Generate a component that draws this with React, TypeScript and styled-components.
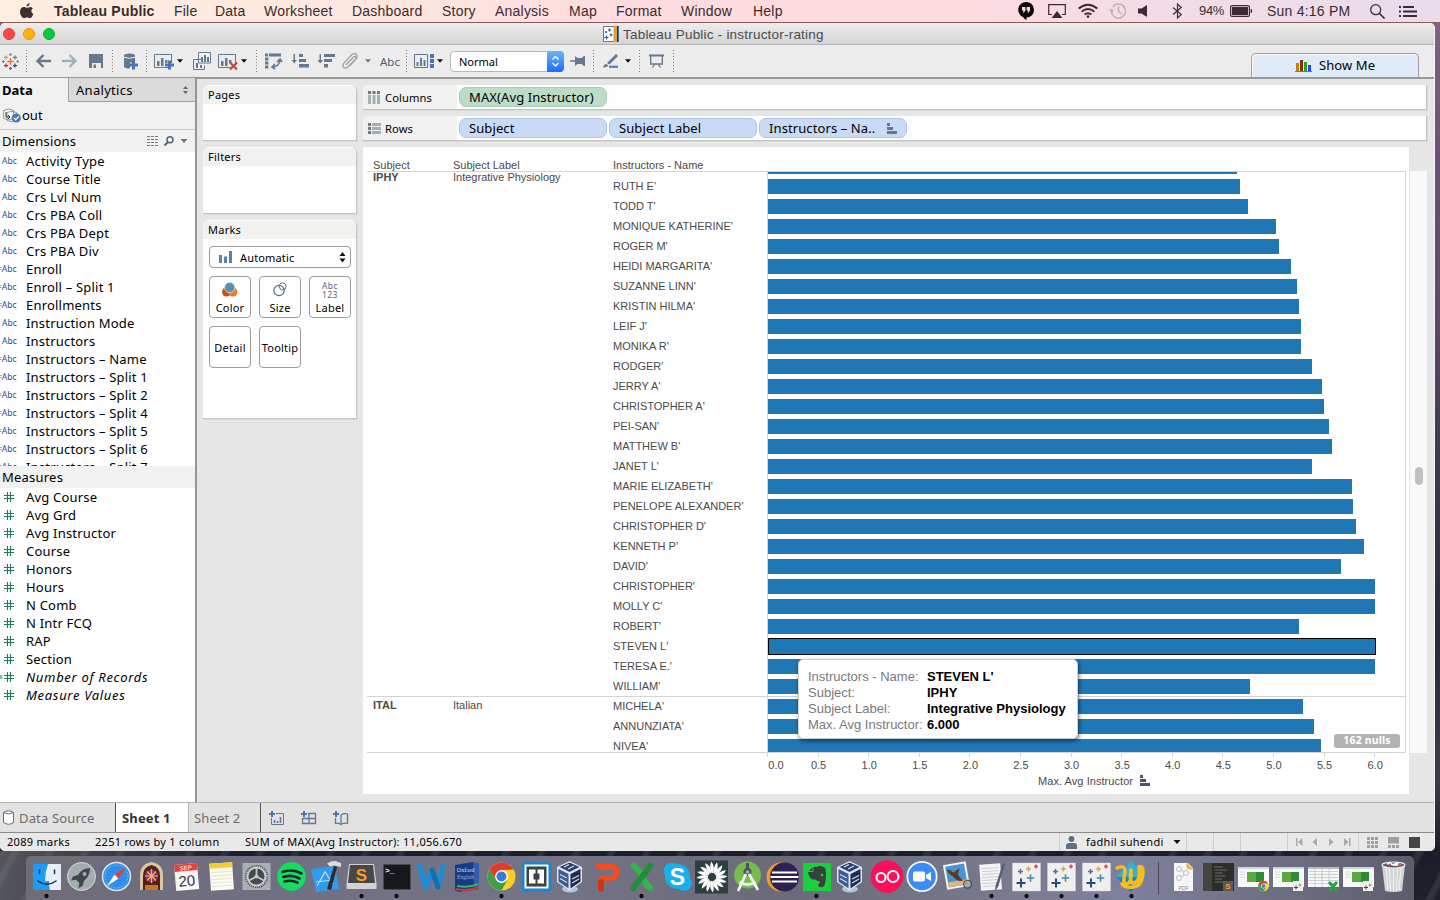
import React from "react";
import styled, { createGlobalStyle, css } from "styled-components";

const UI = `"Noto Sans", "Open Sans", sans-serif`;
const HELV = `"Liberation Sans", Arial, sans-serif`;
const SLATE = "#66788c";
const BLUE = "#4a74b8";

const Global = createGlobalStyle`
  *, *::before, *::after { box-sizing: border-box; }
  body { margin: 0; overflow: hidden; font-family: ${UI}; color: #000; }
  svg { display: block; overflow: visible; }
`;

/* ---------- shell ---------- */
const Desktop = styled.div`
  width: 1440px;
  height: 900px;
  display: flex;
  flex-direction: column;
  overflow: hidden;
  background:
    repeating-linear-gradient(118deg, transparent 0 9px, rgba(150, 150, 165, 0.16) 12px 15px, transparent 19px 31px) 0 851px / 1440px 49px no-repeat,
    linear-gradient(90deg, #55555c 0, #45454e 60px, transparent 240px) 0 851px / 1440px 49px no-repeat,
    linear-gradient(180deg, #87648b 0, #6c4f76 160px, #64486c 300px, #3b3a4d 460px, #262b38 640px, #3c3d46 780px, #1b1e28 850px, #1d212b 900px);
`;

const MenuBar = styled.header`
  height: 23px;
  flex: none;
  display: flex;
  align-items: center;
  padding-left: 20px;
  border-bottom: 1px solid #8b5a58;
  background: linear-gradient(90deg, #fdeee0 0, #fee7e0 350px, #fddcdf 640px, #fddbe0 960px, #f2dce6 1180px, #e9dceb 1440px);
  font-family: ${HELV};
  font-size: 14px;
  color: #3c2a2c;
`;

const Spot = styled.div<{ $ml?: number; $w: number }>`
  flex: none;
  margin-left: ${(p) => p.$ml ?? 0}px;
  width: ${(p) => p.$w}px;
  display: flex;
  align-items: center;
  white-space: nowrap;
`;

const MenuItem = styled(Spot)<{ $bold?: boolean; $ls?: number; $size?: number }>`
  height: 22px;
  line-height: 22px;
  font-size: ${(p) => p.$size ?? 14}px;
  font-weight: ${(p) => (p.$bold ? 700 : 400)};
  letter-spacing: ${(p) => p.$ls ?? 0.22}px;
`;

const Window = styled.main`
  width: 1435px;
  height: 828px;
  flex: none;
  display: flex;
  flex-direction: column;
  background: #ececec;
  border-radius: 5px;
  border-right: 1px solid #f6f6f6;
  overflow: hidden;
`;

const TitleBar = styled.div`
  height: 22px;
  flex: none;
  display: flex;
  align-items: center;
  padding-left: 3px;
  background: linear-gradient(#ededed, #d4d4d4);
  border-bottom: 1px solid #b3b3b3;
  font-family: ${HELV};
  font-size: 13.5px;
  color: #4b4b4b;
`;

const Light = styled.i<{ $c: string; $b: string }>`
  width: 12px;
  height: 12px;
  margin-right: 8px;
  border-radius: 50%;
  background: ${(p) => p.$c};
  border: 1px solid ${(p) => p.$b};
`;

const Title = styled.div`
  display: flex;
  align-items: center;
  gap: 4px;
  margin-left: 540px;
  padding-top: 1px;
  letter-spacing: 0.21px;
  white-space: nowrap;
`;

const Toolbar = styled.div`
  height: 32px;
  flex: none;
  display: flex;
  align-items: center;
  padding-left: 2px;
  background: #ececec;
`;

const ToolText = styled(Spot)`
  font-size: 11.5px;
  color: #4a5d73;
`;

const ToolDivider = styled.i<{ $ml: number }>`
  flex: none;
  width: 1px;
  height: 22px;
  margin-left: ${(p) => p.$ml}px;
  background: repeating-linear-gradient(#7d7d7d 0 1px, transparent 1px 3px);
`;

const FitSelect = styled.div`
  flex: none;
  width: 114px;
  height: 21px;
  margin-left: 6px;
  display: flex;
  border: 1px solid #b7b7b7;
  border-radius: 4px;
  background: #fff;
  font-size: 11px;
  line-height: 19px;
  padding-left: 8px;
  justify-content: space-between;
`;

const Stepper = styled.div`
  width: 17px;
  margin: -1px;
  border-radius: 0 4px 4px 0;
  background: linear-gradient(#6cb4fa, #1a6dfb);
  display: grid;
  place-items: center;
`;

const ShowMe = styled.div`
  flex: none;
  align-self: flex-end;
  width: 168px;
  height: 24px;
  margin-left: 577px;
  display: flex;
  align-items: center;
  justify-content: center;
  gap: 7px;
  border: 1px solid #979fa5;
  border-bottom: 0;
  border-radius: 5px 5px 0 0;
  background: #dfebf6;
  box-shadow: inset 1px 1px #fff;
  font-size: 13px;
  line-height: 21px;
  letter-spacing: 0.1px;
`;

const Body = styled.div`
  height: 725px;
  flex: none;
  display: flex;
  background: #e6e6e6;
  border-top: 2px solid #999;
`;

/* ---------- data pane ---------- */
const Side = styled.aside`
  width: 197px;
  flex: none;
  margin-top: -1px;
  display: flex;
  flex-direction: column;
  background: #fff;
  border-right: 2px solid #949494;
`;

const SideTabs = styled.div`
  height: 24px;
  flex: none;
  display: flex;
  font-size: 13px;
`;

const DataTab = styled.div`
  width: 68px;
  padding-left: 2px;
  line-height: 24px;
  font-weight: 700;
  background: #f1f1f1;
`;

const AnalyticsTab = styled.div`
  flex: 1;
  display: flex;
  justify-content: space-between;
  padding: 1px 7px 0;
  line-height: 23px;
  letter-spacing: 0.3px;
  background: #dadada;
  border: solid #a0a0a0;
  border-width: 0 0 1px 1px;
  & > svg { margin-top: 7px; }
`;

const Source = styled.div`
  height: 28px;
  flex: none;
  display: flex;
  align-items: center;
  gap: 1px;
  padding: 0 0 1px 3px;
  background: #f1f1f1;
  border-bottom: 1px solid #cacaca;
  font-size: 13px;
`;

const PaneHead = styled.div`
  height: 22px;
  flex: none;
  display: flex;
  align-items: center;
  padding-left: 2px;
  background: #f1f1f1;
  font-size: 13px;
  letter-spacing: 0.22px;
`;

const HeadTools = styled.div`
  margin-left: auto;
  margin-right: 7px;
  display: flex;
  align-items: center;
  gap: 5px;
`;

const FieldList = styled.div<{ $h: number }>`
  height: ${(p) => p.$h}px;
  flex: none;
  overflow: hidden;
`;

const FieldRow = styled.div<{ $italic?: boolean }>`
  height: 18px;
  display: flex;
  align-items: center;
  font-size: 13px;
  line-height: 18px;
  letter-spacing: ${(p) => (p.$italic ? 0.68 : 0.2)}px;
  white-space: nowrap;
  font-style: ${(p) => (p.$italic ? "italic" : "normal")};
`;

const FieldType = styled.span<{ $calc?: boolean }>`
  flex: none;
  width: 26px;
  padding-left: 2px;
  text-indent: ${(p) => (p.$calc ? "-5px" : "0")};
  font-size: 8.5px;
  letter-spacing: 0;
  color: #234f93;
`;

const HashBox = styled.span`
  flex: none;
  width: 26px;
  padding-left: 4px;
`;

/* ---------- cards ---------- */
const Cards = styled.div`
  width: 154px;
  flex: none;
  margin: 6px 0 0 6px;
  display: flex;
  flex-direction: column;
  gap: 6px;
`;

const Card = styled.section<{ $h: number }>`
  height: ${(p) => p.$h}px;
  flex: none;
  border: solid #c5c5c5;
  border-width: 0 1px 1px 0;
  border-radius: 6px 6px 0 0;
  box-shadow: 1px 1px #dadada;
  background: #fdfdfd;
  font-size: 11px;
  overflow: hidden;
`;

const CardTitle = styled.h3`
  margin: 0;
  height: 19px;
  padding-left: 5px;
  background: #f1f1ef;
  border-top: 1px solid #fff;
  font: inherit;
  line-height: 18px;
  letter-spacing: 0.25px;
`;

const MarkSelect = styled.div`
  width: 142px;
  height: 22px;
  margin: 7px 0 8px 6px;
  padding: 0 4px 0 9px;
  display: flex;
  align-items: center;
  gap: 7px;
  border: 1px solid #9c9c9c;
  border-radius: 4px;
  background: #fff;
  letter-spacing: 0.15px;
  & > :last-child { margin-left: auto; }
`;

const MarkGrid = styled.div`
  display: grid;
  grid-template-columns: repeat(3, 42px);
  grid-auto-rows: 42px;
  gap: 8px;
  margin-left: 6px;
`;

const MarkButton = styled.div<{ $plain?: boolean }>`
  display: flex;
  flex-direction: column;
  align-items: center;
  justify-content: ${(p) => (p.$plain ? "center" : "space-between")};
  padding: ${(p) => (p.$plain ? "0" : "5px 0 2px")};
  border: 1px solid #9c9c9c;
  border-radius: 4px;
  background: #fff;
  line-height: 15px;
  letter-spacing: 0.22px;
  white-space: nowrap;
`;

const LabelGlyph = styled.div`
  font-size: 8.5px;
  line-height: 8.5px;
  letter-spacing: 0.4px;
  color: #4f6781;
  text-align: center;
`;

/* ---------- work area ---------- */
const Work = styled.div`
  flex: 1;
  min-width: 0;
  margin: 6px 0 0 6px;
  display: flex;
  flex-direction: column;
`;

const Shelf = styled.div`
  width: 1064px;
  height: 25px;
  flex: none;
  margin-bottom: 6px;
  display: flex;
  align-items: center;
  gap: 2px;
  background: #fdfdfd;
  border: solid #c2c2c2;
  border-width: 0 1px 1px 0;
  box-shadow: 1px 1px #d9d9d9;
  border-radius: 6px 0 0 0;
`;

const ShelfName = styled.div`
  width: 94px;
  height: 24px;
  flex: none;
  display: flex;
  align-items: center;
  gap: 4px;
  padding: 0 0 0 5px;
  background: #f1f1ef;
  border-radius: 6px 0 0 0;
  font-size: 11.2px;
  letter-spacing: 0.1px;
`;

const Pill = styled.div<{ $green?: boolean }>`
  width: 148px;
  height: 20px;
  flex: none;
  display: flex;
  align-items: center;
  justify-content: space-between;
  padding: 0 9px;
  border-radius: 7px;
  font-size: 13px;
  letter-spacing: 0.1px;
  white-space: nowrap;
  ${(p) =>
    p.$green
      ? css`background: #bddcc6; border: 1px solid #a9cdb6;`
      : css`background: #c8daf4; border: 1px solid #adc4e4;`}
`;

const VizRow = styled.div`
  display: flex;
  height: 647px;
`;

const Viz = styled.section`
  position: relative;
  width: 1046px;
  height: 647px;
  flex: none;
  padding: 0 4px;
  background: #fff;
  font-family: ${HELV};
  font-size: 11px;
  color: #4a4a4a;
`;

const VizHead = styled.div`
  height: 24px;
  display: flex;
  align-items: flex-end;
  line-height: 12px;
  padding-left: 6px;
`;

const Col = styled.span<{ $w: number }>`
  flex: none;
  width: ${(p) => p.$w}px;
`;

const Plot = styled.div`
  position: relative;
  height: 582px;
  width: 1039px;
  overflow: hidden;
  border: 1px solid #d4d4d4;
  border-left: 0;
  display: flex;
`;

const GroupColumn = styled.div`
  width: 400px;
  flex: none;
`;

const Group = styled.div<{ $h: number; $pad?: number }>`
  height: ${(p) => p.$h}px;
  display: flex;
  padding: ${(p) => p.$pad ?? 0}px 0 0 6px;
  line-height: 10px;
  border-bottom: 1px solid #d4d4d4;
  & > b { width: 80px; }
  & > span { width: 160px; }
`;

const Marks = styled.div`
  position: absolute;
  left: 246px;
  top: -16px;
  right: 0;
`;

const MarkRow = styled.div<{ $rule?: boolean }>`
  height: 20px;
  display: flex;
  align-items: center;
  line-height: 20px;
  white-space: nowrap;
  box-shadow: ${(p) => (p.$rule ? "inset 0 1px #d4d4d4" : "none")};
  & > span { width: 154px; flex: none; }
`;

const Lane = styled.div`
  flex: 1;
  height: 20px;
  display: flex;
  align-items: center;
  border-left: 1px solid #d4d4d4;
`;

const Bar = styled.div<{ $active?: boolean }>`
  height: ${(p) => (p.$active ? 17 : 15)}px;
  background: #1f77b4;
  border: ${(p) => (p.$active ? "1px solid #000" : "0")};
`;

const Axis = styled.div`
  margin-left: 400px;
  height: 24px;
  display: flex;
`;

const Tick = styled.div<{ $first?: boolean }>`
  flex: none;
  width: 50.6px;
  border-left: 1px solid #d4d4d4;
  height: 4px;
  & > span {
    display: block;
    width: 40px;
    margin-left: ${(p) => (p.$first ? -12 : -20)}px;
    padding-top: 6px;
    line-height: 12px;
    text-align: center;
  }
`;

const AxisTitle = styled.div`
  display: flex;
  gap: 7px;
  margin-left: 671px;
  line-height: 12px;
  margin-top: -2px;
  letter-spacing: 0.06px;
`;

const Nulls = styled.div`
  position: absolute;
  right: 5px;
  bottom: 4px;
  width: 66px;
  height: 14px;
  border-radius: 3px;
  background: #b3b3b3;
  color: #fff;
  font: 700 10.5px/13px ${UI};
  letter-spacing: 0.15px;
  text-align: center;
`;

const Tooltip = styled.dl`
  position: absolute;
  left: 435px;
  top: 512px;
  width: 280px;
  height: 80px;
  margin: 0;
  padding: 8px 9px;
  display: grid;
  grid-template-columns: 119px auto;
  grid-auto-rows: 16px;
  background: #fff;
  border: 1px solid #cfcfcf;
  border-radius: 5px;
  box-shadow: 1px 2px 4px rgba(0, 0, 0, 0.55);
  font-size: 13px;
  line-height: 17px;
  white-space: nowrap;
  dt { color: #7a7a7a; }
  dd { margin: 0; color: #000; font-weight: 700; }
`;

const ScrollTrack = styled.div`
  width: 17px;
  height: 582px;
  margin: 24px 0 0 1px;
  background: #f9f9f9;
  display: flex;
  justify-content: center;
  align-items: flex-start;
  padding-top: 296px;
`;

const Thumb = styled.i`
  width: 8px;
  height: 18px;
  border-radius: 4px;
  background: #c1c1c1;
`;

/* ---------- sheet tabs and status ---------- */
const SheetBar = styled.div`
  height: 31px;
  flex: none;
  display: flex;
  align-items: stretch;
  background: #e2e2e2;
  border-top: 1px solid #b2b2b2;
  border-bottom: 1px solid #8b8b8b;
  font-size: 13px;
  line-height: 28px;
  color: #666;
`;

const SheetTab = styled.div<{ $w: number; $active?: boolean; $edge?: string; $pad?: number }>`
  width: ${(p) => p.$w}px;
  flex: none;
  display: flex;
  align-items: center;
  gap: 5px;
  padding-left: ${(p) => p.$pad ?? 5}px;
  background: ${(p) => (p.$active ? "#fff" : "transparent")};
  color: ${(p) => (p.$active ? "#333" : "#6a6a6a")};
  font-weight: ${(p) => (p.$active ? 700 : 400)};
  border-right: 1px solid ${(p) => p.$edge ?? "#4f4f4f"};
  letter-spacing: 0.15px;
`;

const NewTabs = styled.div`
  display: flex;
  align-items: center;
  gap: 17px;
  margin-left: 8px;
`;

const Status = styled.footer`
  height: 18px;
  flex: none;
  display: flex;
  background: #e9e9e9;
  font-size: 11px;
  line-height: 18px;
`;

const StatusCell = styled(Spot)<{ $line?: boolean; $pad?: number; $gap?: number }>`
  letter-spacing: 0.29px;
  padding-left: ${(p) => p.$pad ?? 0}px;
  gap: ${(p) => p.$gap ?? 0}px;
  border-left: ${(p) => (p.$line ? "1px solid #cfcfcf" : "0")};
`;

/* ---------- dock ---------- */
const DockArea = styled.div`
  height: 49px;
  padding: 5px 26px 0;
`;

const Dock = styled.nav`
  height: 44px;
  display: flex;
  padding-left: 2.5px;
  border-radius: 5px 5px 0 0;
  background: linear-gradient(90deg, #6f6c78 0, #706f81 200px, #747488 520px, #6b6a78 760px, #7b7c92 1010px, #7f819d 1100px, #5d5e6c 1386px);
`;

const DockCell = styled.div<{ $run?: boolean }>`
  width: 35px;
  height: 44px;
  flex: none;
  background: ${(p) => (p.$run ? "radial-gradient(circle at 17.5px 40px, #0c0c14 1.8px, transparent 2.4px)" : "none")};
`;

const DockDivider = styled.i`
  width: 1px;
  height: 32px;
  margin: 6px 6.5px 0 9.5px;
  background: #45464f;
`;

/* ---------- toolbar drawings ---------- */
const Caret = ({ c = "#111", w = 7 }: { c?: string; w?: number }) => (
  <svg width={w} height={4} viewBox="0 0 7 4"><path d="M0 0h7L3.5 4z" fill={c} /></svg>
);

const plusPath = (x: number, y: number, r: number) => `M${x - r} ${y}h${2 * r}M${x} ${y - r}v${2 * r}`;

const TableauLogo = () => (
  <svg width="17" height="17" viewBox="0 0 17 17" strokeWidth="1.2" fill="none">
    <path d={plusPath(8.5, 8.5, 3.2)} stroke="#e8762c" strokeWidth="1.5" />
    <path d={plusPath(4, 4.4, 2)} stroke="#e8912c" />
    <path d={plusPath(13, 4.4, 2)} stroke="#5b879b" />
    <path d={plusPath(4, 12.6, 2)} stroke="#c72035" />
    <path d={plusPath(13, 12.6, 2)} stroke="#1f447e" />
    <path d={plusPath(8.5, 1.6, 1.5)} stroke="#6ca0b5" />
    <path d={plusPath(8.5, 15.4, 1.5)} stroke="#5b6591" />
    <path d={plusPath(1.4, 8.5, 1.4)} stroke="#c0607a" />
    <path d={plusPath(15.6, 8.5, 1.4)} stroke="#7199a6" />
  </svg>
);

const Arrow = ({ flip, c = SLATE }: { flip?: boolean; c?: string }) => (
  <svg width="15" height="14" viewBox="0 0 15 14">
    <path d="M15 7H2M7.500 1L1.500 7l6 6" stroke={c} strokeWidth="2.400" fill="none" transform={flip ? "translate(15 0) scale(-1 1)" : undefined} />
  </svg>
);

const SaveIcon = () => (
  <svg width="14" height="14"><path d="M0 0h14v14H0z" fill={SLATE} /><path d="M3 9h9v5H3z" fill="#ececec" /><path d="M4.500 10.500h2.500V14H4.500z" fill={SLATE} /></svg>
);

const DbPlus = () => (
  <svg width="14" height="17">
    <path d="M0 2.500v11.500q2.500 2 6 1.500v-6h5V2.500z" fill={SLATE} /><ellipse cx="5.500" cy="2.500" rx="5.500" ry="2" fill={SLATE} />
    <path d="M0 4.200q5.500 2.300 11 0" stroke="#ececec" fill="none" />
    <path d="M5 12h9M9.500 7.500v9" stroke={BLUE} strokeWidth="3" />
  </svg>
);

const ChartBox = ({ children }: { children?: React.ReactNode }) => (
  <svg width="20" height="17">
    <path d="M14 14.500H.500v-13h17V10" fill="none" stroke={SLATE} />
    <path d="M3 8h2.500v5H3zM7 5h2.500v8H7zM11 7h2.500v3H11z" fill={SLATE} />
    {children}
  </svg>
);

const DupIcon = () => (
  <svg width="18" height="18">
    <path d="M5.500.500h12v10.500h-12z" fill="#f3f3f3" stroke={SLATE} />
    <path d="M8 5h2v5H8zM11 3h2v7h-2zM14 5h2v5h-2z" fill={SLATE} />
    <path d="M8 7.500H.500v10h11v-4" fill="none" stroke={SLATE} /><path d="M3 11h2v5H3zM7 13h2v3H7z" fill={SLATE} />
  </svg>
);

const SwapIcon = () => (
  <svg width="17" height="16" fill="none" stroke={SLATE}>
    <path d="M0 2h16" strokeWidth="3" strokeDasharray="3 1 12" /><path d="M1.700 4.500V16" strokeWidth="3.400" strokeDasharray="3 1" />
    <path d="M7 14q7 0 8-7M12 9l3-3 2 3M10 11l-3 3 3 2" strokeWidth="1.700" />
  </svg>
);

const SortIcon = ({ desc }: { desc?: boolean }) => (
  <svg width="18" height="14" fill={SLATE}>
    <path d="M2.500 0h1.500v6h2L3.200 9.500.500 6h2z" />
    {desc ? <path d="M7 0h11v3H7zM7 5h8v3H7zM7 10h4v3.500H7z" /> : <path d="M8 0h4v3H8zM8 5h7v3H8zM8 10h10v3.500H8z" />}
  </svg>
);

const ClipIcon = () => (
  <svg width="16" height="16" fill="none" stroke="#9a9fa6" strokeWidth="1.200">
    <path d="M4 12l7.500-8q1.500-1.200 2.300 0 .6 1-.4 2.200L6 14q-2.500 2-4.500.3-1.500-2 .5-4.300L9.500 2q2.600-2.300 4.800-.7 1.700 2-.2 4.500L8 12.500" />
  </svg>
);

const FitIcon = () => (
  <svg width="20" height="14">
    <path d="M.500.500h13v13H.500z" fill="none" stroke={SLATE} /><path d="M2.500 8h2v4h-2zM6 4h2v8H6zM9.500 6h2v6h-2z" fill={SLATE} />
    <path d="M16 0h4v4h-4zM16 5h4v4h-4zM16 10h4v4h-4z" fill={BLUE} />
  </svg>
);

const PinIcon = () => (
  <svg width="15" height="12"><path d="M0 6h6" stroke={SLATE} strokeWidth="1.300" /><path d="M5 1l2.500 2h4L14 1h1v10h-1l-2.500-2h-4L5 11z" fill={SLATE} /></svg>
);

const PenIcon = () => (
  <svg width="15" height="14"><path d="M13 0l2 2-8.500 8.500-2.500-1.500z" fill={SLATE} /><path d="M0 13.500q1-3.500 3-3.500l2.500 1.500Q4 13.500 0 13.500z" fill={SLATE} /><path d="M6 11.800h9v2H6z" fill={BLUE} /></svg>
);

const EaselIcon = () => (
  <svg width="15" height="14" fill="none" stroke={SLATE}><path d="M0 1.500h15" strokeWidth="2" /><path d="M1.700 2v8h11.600V2M5.500 10.500l-2 3M9.500 10.500l2 3" strokeWidth="1.300" /></svg>
);

const StepIcon = ({ white }: { white?: boolean }) => (
  <svg width="7" height="10"><path d={white ? "M.500 3.500l3-3 3 3M.500 7l3 3 3-3" : "M.500 4l3-4 3 4zM.500 6.500h6l-3 4z"} fill={white ? "none" : "#111"} stroke={white ? "#fff" : "none"} strokeWidth="1.400" /></svg>
);

const SortGlyph = ({ c = SLATE }: { c?: string }) => (
  <svg width="10" height="11" fill={c}><path d="M0 0h3v3H0zM0 4h6v3H0zM0 8h10v3H0z" /></svg>
);

const HashIcon = ({ calc }: { calc?: boolean }) => (
  <svg width="10" height="10" stroke="#1f7a5b" strokeWidth="1.100" fill="none">
    <path d="M0 3.500h10M0 6.500h10M3.500 0v10M6.500 0v10" />{calc && <path d="M-5 4h3.500M-5 6h3.500" />}
  </svg>
);

/* ---------- menu bar drawings ---------- */
const Apple = () => (
  <svg width="14" height="16" viewBox="0 0 14 16" fill="#3f3030"><path d="M9.600 0c.2 1.700-1.300 3.500-3 3.500C6.400 1.900 8 .2 9.600 0zM12.900 5.400c-2.300 1.400-1.900 4.400.5 5.400-.6 1.900-2 4.400-3.400 4.400-1.200 0-1.500-.7-2.900-.7s-1.800.7-2.900.7C2.200 15.200 0 11.700 0 8.700c0-3 1.900-4.700 3.800-4.700 1.300 0 2.300.8 3.100.8.800 0 2-.9 3.600-.9 1 .1 1.900.6 2.400 1.500z" /></svg>
);

const STATUS_INK = "#3f2936";

const Hangouts = () => (
  <svg width="16" height="18"><path d="M8 0a7.800 7.800 0 0 1 .5 15.600V18Q6 17 5 15A7.800 7.800 0 0 1 8 0z" fill="#0a0608" /><path d="M4 5h3.400v3.500L6 10.500H4.800l.8-2H4zM8.600 5H12v3.500l-1.400 2H9.400l.8-2H8.600z" fill="#f5dce2" /></svg>
);
const Airplay = () => (
  <svg width="18" height="14"><path d="M4 10.500H.700V.700h16.600v9.800H14" fill="none" stroke={STATUS_INK} strokeWidth="1.200" /><path d="M9 7l5.500 7h-11z" fill={STATUS_INK} /></svg>
);
const Wifi = () => (
  <svg width="20" height="14" fill="none" stroke={STATUS_INK} strokeWidth="1.900"><path d="M.700 4.600Q10-3 19.300 4.600M3.700 7.700q6.300-5.200 12.600 0M6.600 10.600q3.400-2.800 6.800 0" /><circle cx="10" cy="12.600" r="1.300" fill={STATUS_INK} stroke="none" /></svg>
);
const TimeMachine = () => (
  <svg width="18" height="16" fill="none" stroke="#c3a9b6" strokeWidth="1.500"><path d="M2.600 9A7 7 0 1 0 4 3.800M9.500 3.500V8.500l3 2.500" /><path d="M0 6.500h5L2.600 10z" fill="#c3a9b6" stroke="none" /></svg>
);
const Bluetooth = () => (
  <svg width="9" height="16" fill="none" stroke={STATUS_INK} strokeWidth="1.200"><path d="M0 4.500l8.300 7L4.500 15V1l3.800 3.500L0 11.500" /></svg>
);
const Battery = () => (
  <svg width="23" height="12"><rect x=".6" y=".6" width="18.800" height="10.800" rx="1.500" fill="none" stroke={STATUS_INK} strokeWidth="1.200" /><path d="M2 2h16v8H2z" fill={STATUS_INK} /><path d="M21 4q2 2 0 4z" fill={STATUS_INK} stroke={STATUS_INK} strokeWidth=".6" /></svg>
);

/* ---------- dock drawings ---------- */
const tile = (children: React.ReactNode) => <svg width="35" height="44" viewBox="0 0 35 44">{children}</svg>;

const T = (x: number, y: number, size: number, fill: string, s: string, bold = true, family = HELV) => (
  <text x={x} y={y} fontSize={size} fill={fill} fontWeight={bold ? 700 : 400} fontFamily={family} textAnchor="middle">{s}</text>
);

const chromeMark = (cx: number, cy: number, s: number) => (
  <g transform={`translate(${cx} ${cy}) scale(${s})`}>
    <circle r="14" fill="#f7cf2d" />
    <path d="M-12.100-7A14 14 0 0 1 12.100-7L0-6.500-5.600 3.200z" fill="#e23a2e" />
    <path d="M-12.100-7A14 14 0 0 0 0 14l5.800-10.500L0 6.500-5.600 3.200z" fill="#3ba14a" />
    <circle r="6.400" fill="#fff" /><circle r="5" fill="#3c7bd9" />
  </g>
);

const excelMark = (
  <g strokeWidth="6" strokeLinecap="round" fill="none"><path d="M9.500 10q6 4 9 11t7.500 11" stroke="#35b34c" /><path d="M26 9.500Q22 17 17 22T9.500 32.500" stroke="#1f8f38" /></g>
);

const vbox = tile(
  <g>
    <ellipse cx="16" cy="33" rx="8" ry="3.500" fill="#b9c3d6" />
    <path d="M15.500 5L28 11v15l-12.500 8.500L3 26V11z" fill="#dfe5f0" />
    <path d="M15.500 6.500L25.500 11l-10 5-10-5z" fill="#2b4272" /><path d="M4.500 13l10 5v14.500l-10-7z" fill="#3a5a96" /><path d="M26.500 13l-10 5v14.500l10-7z" fill="#1c2d55" />
    <path d="M6 18.500l7 3.500M6 22.500l7 4M18 23l7-3.500M18 27l7-4M10 11l5-2.500M14 13l6-3" stroke="#d5dcea" strokeWidth="1.200" />
  </g>
);

const tableauTile = tile(
  <g strokeWidth="1.600">
    <path d="M3.500 7h28v28h-28z" fill="#efeff0" stroke="#d2d2d4" strokeWidth=".5" />
    <path d={plusPath(12, 27, 4.500)} stroke="#1c4f7d" strokeWidth="2" /><path d={plusPath(21.500, 22, 3.800)} stroke="#4a87a8" />
    <path d={plusPath(11.500, 15.500, 2.500)} stroke="#5a6f9a" /><path d={plusPath(19.500, 13, 2.500)} stroke="#e0a057" /><path d={plusPath(27, 10.500, 2)} stroke="#cf4e57" />
  </g>
);

const windowThumb = (badge: React.ReactNode, grid = false) =>
  tile(
    <g>
      <path d="M2 11h31v20H2z" fill="#f7f8f8" /><path d="M2 11h31v2H2z" fill={grid ? "#b8bdc2" : "#cfd6da"} />
      {grid ? (
        <path d="M3 15.500h29M3 18.500h29M3 21.500h29M3 24.500h29M3 27.500h29M9 13v18M16 13v18M23 13v18" stroke="#c3c5c5" strokeWidth=".8" />
      ) : (
        <g><path d="M11 16h17v10H11z" fill="#5ba83c" /><path d="M20 16h8v10h-8z" fill="#2f8c36" /><path d="M4 16h5M4 18.500h5M4 21h5" stroke="#ccd" strokeWidth=".8" /></g>
      )}
      {badge}
    </g>
  );

const miniTableau = (
  <g><path d="M22 25h10v10H22z" fill="#f0f0f1" /><path d={plusPath(25, 31.500, 2)} stroke="#1c4f7d" /><path d={plusPath(29, 29, 1.500)} stroke="#c5824e" /></g>
);

const dockMain: { run?: boolean; art: React.ReactNode }[] = [
  { run: true, art: tile(<g><path d="M4 8h28v26H4z" fill="#1e9cf4" /><path d="M19 8h13v26H21q-1.500-5-1-9h-4q0-9 3-17z" fill="#e6eff8" /><path d="M10.500 14v3.500M25.500 14v3.500M9 25q9 6.500 18 0" stroke="#173047" strokeWidth="1.500" fill="none" strokeLinecap="round" /></g>) },
  { art: tile(<g><circle cx="17.500" cy="20.500" r="14" fill="#a4adae" stroke="#d5dada" /><path d="M26 12q-8 0-12 7l-5 1.500-2 4 5-.8 3.300 3.300-.8 5 4-2 1.500-5q6-5 6-13z" fill="#3e484d" /><circle cx="20.500" cy="18" r="2" fill="#a4adae" /></g>) },
  { art: tile(<g><circle cx="17.500" cy="20.500" r="14" fill="#2f8fe8" stroke="#dde4ea" strokeWidth="1.500" /><circle cx="17.500" cy="20.500" r="11.500" fill="none" stroke="#9fd4fb" strokeDasharray="1 1.500" /><path d="M27 11.500l-7.500 11-4-4z" fill="#f0362f" /><path d="M8 30l7.500-11.500 4 4z" fill="#fff" /></g>) },
  { art: tile(<g><path d="M6 34V19Q6 8 17.500 6 29 8 29 19v15z" fill="#d8c6a4" /><path d="M9 34V20q0-9 8.500-11Q26 11 26 20v14z" fill="#53230f" /><circle cx="17.500" cy="20" r="6.500" fill="#8b2f86" /><path d="M17.500 13v14M11 20h13M13 15.500l9 9M22 15.500l-9 9" stroke="#f0bc3c" strokeWidth="1.200" /><path d="M11 29h13v5H11z" fill="#c47a22" /></g>) },
  { art: tile(<g transform="rotate(-5 17.500 20)"><path d="M6 8h23v26H6z" fill="#f7f7f7" /><path d="M6 8h23v7H6z" fill="#e8413a" />{T(17.500, 14, 6, "#fff", "SEP", false)}{T(17.500, 30, 15, "#333", "20", false)}</g>) },
  { art: tile(<g transform="rotate(-4 17.500 20)"><path d="M6 7h23v27H6z" fill="#fdfbf2" /><path d="M6 7h23v5H6z" fill="#f6cd2c" /><path d="M7 16h21M7 19.500h21M7 23h21M7 26.500h21M7 30h21" stroke="#dbd8cb" strokeWidth=".7" /></g>) },
  { art: tile(<g><path d="M3.500 7h28v27h-28z" fill="#a8b0b6" /><circle cx="17.500" cy="20.500" r="11.500" fill="#43494d" /><circle cx="17.500" cy="20.500" r="9" fill="none" stroke="#c6cbce" strokeWidth="2" /><circle cx="17.500" cy="20.500" r="10.500" fill="none" stroke="#c6cbce" strokeWidth="1.500" strokeDasharray="1 1" /><circle cx="17.500" cy="20.500" r="2" fill="#c6cbce" /><path d="M17.500 20.500V12M17.500 20.500l7.500 4M17.500 20.500l-7.500 4" stroke="#c6cbce" strokeWidth="1.700" /></g>) },
  { art: tile(<g><circle cx="17.500" cy="20.500" r="14.300" fill="#14dd62" /><path d="M8.500 16q10-3.500 19 1.500M9.500 21q8.500-2.800 16 1.500M10.500 25.500q7-2 13 1.200" stroke="#17242a" strokeWidth="2.600" fill="none" strokeLinecap="round" /></g>) },
  { art: tile(<g><path d="M2 13l24-3 4 23-23 3z" fill="#2f9bea" /><path d="M8 30l8-14 8 12M7 26l17-2" stroke="#b8e0fa" strokeWidth="1.200" fill="none" /><path d="M18 7.500q7-4 11-1.500l3 1v4l-4-1-3-.5-4 1z" fill="#d8dde0" /><path d="M25 10l3 1-6 23-4-1z" fill="#2d2b2c" /></g>) },
  { run: true, art: tile(<g><path d="M5 8h25l2.500 20v5h-30v-5z" fill="#d2d2d3" /><path d="M6 9h23l2 18H4z" fill="#474747" />{T(17.500, 25, 17, "#f99a2c", "S")}</g>) },
  { run: true, art: tile(<g><path d="M4 8h28v26H4z" fill="#17191b" stroke="#777c80" /><text x="6" y="17" fontSize="8" fontWeight="700" fill="#eee" fontFamily={`"Liberation Mono", monospace`}>{">_"}</text></g>) },
  { art: tile(<g fill="none" stroke="#1c8cd6" strokeWidth="5" strokeLinejoin="round" strokeLinecap="round"><path d="M6 10l5.500 21L18 14l6 17 5-21" /><path d="M18 14l6 17" stroke="#0e6fb5" /></g>) },
  { art: tile(<g><path d="M6 9l18-3 6 2-1 25-19 3-4-2z" fill="#163a86" /><path d="M24 6l6 2-1 22-4 1z" fill="#2d5eb2" />{T(16.500, 16, 6, "#d9e3f6", "Oxford", false, `"Liberation Serif", serif`)}{T(16.500, 23, 5.500, "#9fb6e0", "English", false, `"Liberation Serif", serif`)}<path d="M8 30q12 2 21-2" stroke="#32b36a" strokeWidth="2" fill="none" /><path d="M7 33q12 3 22-2" stroke="#d83434" strokeWidth="2" fill="none" /></g>) },
  { run: true, art: tile(chromeMark(17.500, 20.500, 1)) },
  { art: tile(<g><rect x="2.500" y="6" width="30" height="30" rx="4" fill="#1f86ce" /><path d="M6.500 9.500h22v22h-22z" fill="#3f4347" stroke="#f4f6f8" strokeWidth="2" /><path d="M10 13.500h6.500v4h-2v6h2v4H10zM25 13.500h-6.500v4h2v6h-2v4H25z" fill="#fff" /></g>) },
  { art: vbox },
  { art: tile(<g fill="none" stroke="#f04c1e" strokeWidth="5.500" strokeLinecap="round" strokeLinejoin="round"><path d="M9 10.500h14q6 1 5 6-1 5.500-7 5.500h-7q-2 0-2 3v7" /><path d="M12 26v7" stroke="#cf3410" /></g>) },
  { run: true, art: tile(excelMark) },
  { art: tile(<g><circle cx="18.500" cy="20.500" r="12.500" fill="#16b0ee" /><circle cx="12.500" cy="14.500" r="7.800" fill="#16b0ee" /><circle cx="25" cy="27" r="7.800" fill="#16b0ee" />{T(18.500, 28.500, 23, "#fff", "S")}</g>) },
  { art: tile(<g><path d="M1 4.500h33v33H1z" fill="#2b3f3f" />{Array.from({ length: 16 }, (_, i) => <path key={i} d="M18 17q-3-5-1-11.500 4 4 2.400 11.500z" fill="#fff" transform={`rotate(${i * 22.5} 18 21)`} />)}</g>) },
  { art: tile(<g><circle cx="18.500" cy="19" r="13.500" fill="#77bb4d" /><circle cx="18.500" cy="16" r="4" fill="#4a5759" /><path d="M18.500 7v6" stroke="#4a5759" strokeWidth="3" /><path d="M17 18L9 35M20 18l9 16M10.500 26q8 5 16 0" stroke="#f0f2f2" strokeWidth="2.800" fill="none" /><circle cx="18.500" cy="16" r="1.800" fill="#9ab" /></g>) },
  { art: tile(<g><circle cx="17" cy="21" r="14.500" fill="#f29a25" /><circle cx="20.500" cy="21" r="14.500" fill="#2f2054" /><path d="M8 16.500h25M6.500 21h28M8 25.500h25" stroke="#fff" strokeWidth="1.900" /></g>) },
  { run: true, art: tile(<g><path d="M4 7h28v28H4z" fill="#19d13f" /><path d="M9 16l5-5h4q2-2 7 0 2 1 2 8-.5 9-2 11-2 2-5 1-2-3 1-4l-.5-2q-2 1-4-1.500-6 1-7.500-7.500z" fill="#36423a" /><path d="M9 15.500h5V11" fill="none" stroke="#19d13f" /><circle cx="23" cy="19" r="1.300" fill="#19d13f" /></g>) },
  { art: vbox },
  { art: tile(<g><circle cx="18" cy="20.500" r="16.300" fill="#fb0f58" /><g fill="none" stroke="#fff" strokeWidth="2"><circle cx="12" cy="21.500" r="4.500" /><circle cx="24" cy="20.500" r="5.500" /></g></g>) },
  { art: tile(<g><circle cx="18" cy="20.500" r="14.700" fill="#3b8cf5" stroke="#f1f6fc" strokeWidth="1.800" /><rect x="9" y="15.500" width="12" height="10" rx="2" fill="#fff" /><path d="M22 19l5-3v9l-5-3z" fill="#fff" /></g>) },
  { art: tile(<g transform="rotate(-10 17.500 20)"><path d="M6 7h23v25H6z" fill="#f4f4f4" /><path d="M8 9h19v21H8z" fill="#4794d4" /><path d="M8 25h19v5H8z" fill="#d8b781" /><path d="M9 12q4 1 6 4l7-3-3 6 4 7q-6 0-9-6-4-3-5-8z" fill="#5e3a22" /><circle cx="27" cy="30" r="4" fill="#8f9499" fillOpacity=".7" stroke="#444" /></g>) },
  { run: true, art: tile(<g><g transform="rotate(-4 17.500 20)"><path d="M6 8h21v26H6z" fill="#f4f4f2" /><path d="M8 12h17M8 15h17M8 18h17M8 21h17M8 24h17M8 27h17M8 30h17" stroke="#c4c7cf" strokeWidth=".8" /></g><path d="M29 7l2 1-7 23-3 4 .5-5z" fill="#54606b" /></g>) },
  { run: true, art: tableauTile },
  { run: true, art: tableauTile },
  { run: true, art: tableauTile },
  { run: true, art: tile(<g><path d="M17 5l15 16-15 15L2 21z" fill="#1787bf" /><path d="M17 5l15 16H2z" fill="#38aed6" /><path d="M3 12q8-4 8 4-3 13 2 12 5-2 4-14M17 14q-2 14 3 13 7-2 5-16 4-1 4 4 0 15-10 16-8 1-11-3" stroke="#f8bd1c" strokeWidth="3.500" fill="none" strokeLinecap="round" /></g>) },
];

const dockDocs: React.ReactNode[] = [
  tile(<g><path d="M8 7h14l5 5v23H8z" fill="#f6f6f5" /><path d="M20 6l8 8-7-1z" fill="#f2b33c" /><g stroke="#b6c1cc" fill="none"><circle cx="13" cy="13" r="2.500" /><circle cx="20" cy="17" r="2.500" /><circle cx="13" cy="22" r="2.500" /><path d="M15 14l3 2M18 19l-3 2" /></g>{T(17.500, 33.500, 5, "#888", "PDF", false)}</g>),
  tile(<g><path d="M2 7h31v28H2z" fill="#2c2d29" /><path d="M2 7h9v28H2z" fill="#44453f" /><path d="M13 11h9M14 14h12M14 17h8M14 20h11M14 23h7M14 26h9" stroke="#7d8073" strokeWidth=".8" /><path d="M22 25h10v10H22z" fill="#5b5b5b" />{T(27, 33, 8, "#f99a2c", "S")}</g>),
  windowThumb(chromeMark(27.500, 30, 0.38)),
  windowThumb(miniTableau),
  windowThumb(<path d="M23 26l8 9M31 26l-8 9" stroke="#23a53f" strokeWidth="2.800" />, true),
  windowThumb(miniTableau),
  tile(<g><path d="M6 9h23l-3 26q-8.500 2-17 0z" fill="#d3d5d7" /><path d="M10 12l2 22M25 12l-2 22M17.500 13v22M13.500 13l1 22M21.500 13l-1 22" stroke="#f2f3f4" strokeWidth="1" /><ellipse cx="17.500" cy="9" rx="11.500" ry="3" fill="#5c5f63" stroke="#eef0f1" strokeWidth="1.200" /><path d="M10 8l4-2 3 2 4-2 4 3-6 1z" fill="#fff" /><path d="M13 8.500h2M22 8.500h2" stroke="#d3544a" strokeWidth="1.500" /></g>),
];

/* ---------- data ---------- */
const menus: [string, number][] = [
  ["File", 41], ["Data", 49], ["Worksheet", 88], ["Dashboard", 90], ["Story", 53], ["Analysis", 74],
  ["Map", 47], ["Format", 65], ["Window", 72], ["Help", 30],
];

const dimensions: [string, boolean?][] = [
  ["Activity Type"], ["Course Title"], ["Crs Lvl Num"], ["Crs PBA Coll"], ["Crs PBA Dept"], ["Crs PBA Div"],
  ["Enroll", true], ["Enroll – Split 1", true], ["Enrollments", true], ["Instruction Mode"], ["Instructors"],
  ["Instructors – Name", true], ["Instructors – Split 1", true], ["Instructors – Split 2", true],
  ["Instructors – Split 4", true], ["Instructors – Split 5", true], ["Instructors – Split 6", true], ["Instructors – Split 7", true],
];

const measures = ["Avg Course", "Avg Grd", "Avg Instructor", "Course", "Honors", "Hours", "N Comb", "N Intr FCQ", "RAP", "Section", "Number of Records", "Measure Values"];

const instructors: [string, number][] = [
  ["ALAN ABORLEA'", 469], ["RUTH E'", 472], ["TODD T'", 480], ["MONIQUE KATHERINE'", 508], ["ROGER M'", 511],
  ["HEIDI MARGARITA'", 523], ["SUZANNE LINN'", 529], ["KRISTIN HILMA'", 531], ["LEIF J'", 533], ["MONIKA R'", 533],
  ["RODGER'", 544], ["JERRY A'", 554], ["CHRISTOPHER A'", 556], ["PEI-SAN'", 561], ["MATTHEW B'", 564],
  ["JANET L'", 544], ["MARIE ELIZABETH'", 584], ["PENELOPE ALEXANDER'", 585], ["CHRISTOPHER D'", 588],
  ["KENNETH P'", 596], ["DAVID'", 573], ["CHRISTOPHER'", 607], ["MOLLY C'", 607], ["ROBERT'", 531],
  ["STEVEN L'", 608], ["TERESA E.'", 607], ["WILLIAM'", 482], ["MICHELA'", 535], ["ANNUNZIATA'", 546], ["NIVEA'", 553],
];

const ticks = Array.from({ length: 13 }, (_, i) => (i / 2).toFixed(1));

export default function App() {
  return (
    <>
      <Global />
      <Desktop>
        <MenuBar>
          <Spot $w={14}><Apple /></Spot>
          <MenuItem $ml={20} $w={120} $bold $ls={0.2}>Tableau Public</MenuItem>
          {menus.map(([name, w]) => <MenuItem key={name} $w={w}>{name}</MenuItem>)}
          <Spot $ml={235} $w={16}><Hangouts /></Spot>
          <Spot $ml={14} $w={18}><Airplay /></Spot>
          <Spot $ml={12} $w={20}><Wifi /></Spot>
          <Spot $ml={11} $w={18}><TimeMachine /></Spot>
          <Spot $ml={11} $w={9}><svg width="9" height="12"><path d="M0 3.500h3.500L9 0v12L3.500 8.500H0z" fill={STATUS_INK} /></svg></Spot>
          <Spot $ml={26} $w={9}><Bluetooth /></Spot>
          <MenuItem $ml={17} $w={27} $ls={-0.3} $size={13}>94%</MenuItem>
          <Spot $ml={4} $w={23}><Battery /></Spot>
          <MenuItem $ml={14} $w={84}>Sun 4:16 PM</MenuItem>
          <Spot $ml={19} $w={15}><svg width="15" height="15" fill="none" stroke={STATUS_INK}><circle cx="5.700" cy="5.700" r="5" strokeWidth="1.300" /><path d="M9.500 9.500l5 5" strokeWidth="1.700" /></svg></Spot>
          <Spot $ml={14} $w={18}><svg width="18" height="11" fill={STATUS_INK}><path d="M0 0h2v2H0zM0 4.500h2v2H0zM0 9h2v2H0zM4 0h11v2H4zM4 4.500h14v2H4zM4 9h14v2H4z" /></svg></Spot>
        </MenuBar>

        <Window>
          <TitleBar>
            <Light $c="#fc4848" $b="#dd3a38" /><Light $c="#fdb50a" $b="#dd9b08" /><Light $c="#09cb3c" $b="#0cab30" />
            <Title>
              <svg width="16" height="16"><path d="M.500.500h15v15H.500z" fill="#fff" stroke="#777" /><path d="M10.500 0h3.500v16h-3.500z" fill="#ef9a35" /><path d="M14.500 0v16" stroke="#333" /><path d="M15.500 0v16" stroke="#26669a" strokeDasharray="1 1" /><path d={plusPath(3.500, 11.500, 2) + plusPath(6.500, 4, 1.500) + plusPath(8, 9, 1.500) + plusPath(3, 6, 1)} stroke="#2459a8" strokeWidth="1.200" /></svg>
              Tableau Public - instructor-rating
            </Title>
          </TitleBar>

          <Toolbar>
            <Spot $w={17}><TableauLogo /></Spot>
            <ToolDivider $ml={7} />
            <Spot $ml={9} $w={15}><Arrow /></Spot>
            <Spot $ml={11} $w={15}><Arrow flip c="#a6aeb7" /></Spot>
            <Spot $ml={12} $w={14}><SaveIcon /></Spot>
            <ToolDivider $ml={9} />
            <Spot $ml={11} $w={14}><DbPlus /></Spot>
            <ToolDivider $ml={8} />
            <Spot $ml={7} $w={20}><ChartBox><path d="M11 12h9M15.500 7.500v9" stroke={BLUE} strokeWidth="3" /></ChartBox></Spot>
            <Spot $ml={3} $w={7}><Caret w={6} /></Spot>
            <Spot $ml={9} $w={18}><DupIcon /></Spot>
            <Spot $ml={7} $w={20}><ChartBox><path d="M12 9.500l7 7M19 9.500l-7 7" stroke="#b5533c" strokeWidth="2.200" /></ChartBox></Spot>
            <Spot $ml={3} $w={7}><Caret w={6} /></Spot>
            <ToolDivider $ml={8} />
            <Spot $ml={8} $w={17}><SwapIcon /></Spot>
            <Spot $ml={9} $w={18}><SortIcon /></Spot>
            <Spot $ml={8} $w={18}><SortIcon desc /></Spot>
            <Spot $ml={7} $w={16}><ClipIcon /></Spot>
            <Spot $ml={7} $w={7}><Caret w={6} c="#777" /></Spot>
            <ToolText $ml={8} $w={21}>Abc</ToolText>
            <ToolDivider $ml={5} />
            <Spot $ml={7} $w={20}><FitIcon /></Spot>
            <Spot $ml={3} $w={7}><Caret w={6} /></Spot>
            <FitSelect>Normal<Stepper><StepIcon white /></Stepper></FitSelect>
            <Spot $ml={6} $w={15}><PinIcon /></Spot>
            <ToolDivider $ml={8} />
            <Spot $ml={9} $w={15}><PenIcon /></Spot>
            <Spot $ml={7} $w={6}><Caret w={6} /></Spot>
            <ToolDivider $ml={8} />
            <Spot $ml={9} $w={15}><EaselIcon /></Spot>
            <ToolDivider $ml={9} />
            <ShowMe>
              <svg width="17" height="12"><path d="M1 3h3v8H1z" fill="#b8860b" /><path d="M5 0h3v11H5z" fill="#8f2a0d" /><path d="M9 2h3v9H9z" fill="#22a322" /><path d="M13 5h3v6h-3z" fill="#2a3cff" /><path d="M0 11h17v1H0z" fill="#777" /></svg>
              Show Me
            </ShowMe>
          </Toolbar>

          <Body>
            <Side>
              <SideTabs>
                <DataTab>Data</DataTab>
                <AnalyticsTab>Analytics<svg width="5" height="8" fill="#5d6773"><path d="M0 3l2.500-3L5 3zM0 5h5L2.500 8z" /></svg></AnalyticsTab>
              </SideTabs>
              <Source>
                <svg width="18" height="15"><path d="M.700 2.500q5-3 10 0v8q-5 3-10 0zM4 4.500q5-2.500 9.500 0v8q-4 2.500-9.500 0z" fill="#f7f7f7" stroke="#8b949d" /><path d="M3 4v5h4M5 7l2 2-2 2" stroke="#333" fill="none" /><circle cx="13.200" cy="10" r="4.600" fill="#4678c0" /><path d="M11 10l1.700 1.800 3-3.500" stroke="#fff" strokeWidth="1.300" fill="none" /></svg>
                out
              </Source>
              <PaneHead>
                Dimensions
                <HeadTools>
                  <svg width="12" height="10" stroke="#777" strokeDasharray="3 1"><path d="M0 .5h12M0 3.500h12M0 6.500h12M0 9.500h12" /></svg>
                  <svg width="10" height="10" fill="none" stroke="#52647a"><circle cx="6" cy="3.700" r="3" strokeWidth="1.500" /><path d="M4 6L.500 9.500" strokeWidth="2" /></svg>
                  <Spot $ml={1} $w={8}><Caret c="#6b7480" w={8} /></Spot>
                </HeadTools>
              </PaneHead>
              <FieldList $h={314}>
                {dimensions.map(([name, calc]) => (
                  <FieldRow key={name}><FieldType $calc={calc}>{calc ? "=Abc" : "Abc"}</FieldType>{name}</FieldRow>
                ))}
              </FieldList>
              <PaneHead>Measures</PaneHead>
              <FieldList $h={240}>
                {measures.map((name, i) => (
                  <FieldRow key={name} $italic={i > 9}><HashBox><HashIcon calc={i === 10} /></HashBox>{name}</FieldRow>
                ))}
              </FieldList>
            </Side>

            <Cards>
              <Card $h={56}><CardTitle>Pages</CardTitle></Card>
              <Card $h={67}><CardTitle>Filters</CardTitle></Card>
              <Card $h={199}>
                <CardTitle>Marks</CardTitle>
                <MarkSelect>
                  <svg width="14" height="12" fill="#5585ab"><path d="M0 4h3v8H0zM5 5.500h3V12H5zM10 0h3v12h-3z" /></svg>
                  Automatic
                  <StepIcon />
                </MarkSelect>
                <MarkGrid>
                  <MarkButton>
                    <svg width="16" height="15"><circle cx="4.500" cy="10" r="4.500" fill="#cc5412" /><circle cx="11" cy="10" r="4.500" fill="#ee7a28" /><circle cx="7.700" cy="5.500" r="5.200" fill="#5b8fb5" stroke="#fff" strokeWidth=".6" /></svg>
                    Color
                  </MarkButton>
                  <MarkButton>
                    <svg width="14" height="15" fill="none" stroke="#5b6f84"><circle cx="6" cy="8.500" r="5.200" strokeWidth="1.200" /><circle cx="9.700" cy="4.300" r="3.500" /></svg>
                    Size
                  </MarkButton>
                  <MarkButton><LabelGlyph>Abc<br />123</LabelGlyph>Label</MarkButton>
                  <MarkButton $plain>Detail</MarkButton>
                  <MarkButton $plain>Tooltip</MarkButton>
                </MarkGrid>
              </Card>
            </Cards>

            <Work>
              <Shelf>
                <ShelfName>
                  <svg width="13" height="13" fill="#a5acb4"><path d="M0 0h3v3H0zM4.500 0h3v3h-3zM9 0h3v3H9z" fill={SLATE} /><path d="M0 4h3v9H0zM4.500 4h3v9h-3zM9 4h3v9H9z" /></svg>
                  Columns
                </ShelfName>
                <Pill $green>MAX(Avg Instructor)</Pill>
              </Shelf>
              <Shelf>
                <ShelfName>
                  <svg width="13" height="11" fill="#a5acb4"><path d="M0 0h3v3H0zM0 4h3v3H0zM0 8h3v3H0z" fill={SLATE} /><path d="M4 0h9v3H4zM4 4h9v3H4zM4 8h9v3H4z" /></svg>
                  Rows
                </ShelfName>
                <Pill>Subject</Pill>
                <Pill>Subject Label</Pill>
                <Pill>Instructors – Na..<SortGlyph /></Pill>
              </Shelf>
              <VizRow>
                <Viz>
                  <VizHead><Col $w={80}>Subject</Col><Col $w={160}>Subject Label</Col><Col $w={150}>Instructors - Name</Col></VizHead>
                  <Plot>
                    <GroupColumn>
                      <Group $h={525}><b>IPHY</b><span>Integrative Physiology</span></Group>
                      <Group $h={60} $pad={3}><b>ITAL</b><span>Italian</span></Group>
                    </GroupColumn>
                    <Marks>
                      {instructors.map(([name, w]) => (
                        <MarkRow key={name} $rule={name === "MICHELA'"}>
                          <span>{name}</span>
                          <Lane><Bar $active={name === "STEVEN L'"} style={{ width: w }} /></Lane>
                        </MarkRow>
                      ))}
                    </Marks>
                    <Nulls>162 nulls</Nulls>
                  </Plot>
                  <Axis>{ticks.map((t, i) => <Tick key={t} $first={i === 0}><span>{t}</span></Tick>)}</Axis>
                  <AxisTitle>Max. Avg Instructor<SortGlyph c="#45566a" /></AxisTitle>
                  <Tooltip>
                    <dt>Instructors - Name:</dt><dd>STEVEN L'</dd>
                    <dt>Subject:</dt><dd>IPHY</dd>
                    <dt>Subject Label:</dt><dd>Integrative Physiology</dd>
                    <dt>Max. Avg Instructor:</dt><dd>6.000</dd>
                  </Tooltip>
                </Viz>
                <ScrollTrack><Thumb /></ScrollTrack>
              </VizRow>
            </Work>
          </Body>

          <SheetBar>
            <SheetTab $w={116} $pad={3}>
              <svg width="11" height="15" fill="#fff" stroke="#5b7187"><path d="M.500 2.500v10q5 3.500 10 0v-10q-5-3.500-10 0z" /><path d="M.500 2.500q5 3 10 0" fill="none" /></svg>
              Data Source
            </SheetTab>
            <SheetTab $w={73} $active $edge="#b8b8b8" $pad={6}>Sheet 1</SheetTab>
            <SheetTab $w={72}>Sheet 2</SheetTab>
            <NewTabs>
              <svg width="15" height="14" fill="none" stroke={SLATE}><path d="M7 2.500h7.500v11H2.500V7" /><path d="M5.500 9v3M8.500 10v2M11.500 6v6" strokeWidth="1.600" /><path d="M0 3h6M3 0v6" stroke={BLUE} strokeWidth="2" /></svg>
              <svg width="15" height="14" fill="none" stroke={SLATE}><path d="M7 2.500h7.500v10H1.500V7M1.500 7.500h13M8 3v10" strokeWidth="1.300" /><path d="M0 3h6M3 0v6" stroke={BLUE} strokeWidth="2" /></svg>
              <svg width="15" height="14" fill="none" stroke={SLATE}><path d="M8 4q3-2 6.500-1v9.500q-3.500-1-6.500 1-3-2-5.500-1V7M8 4v9" strokeWidth="1.300" /><path d="M0 3h6M3 0v6" stroke={BLUE} strokeWidth="2" /></svg>
            </NewTabs>
          </SheetBar>

          <Status>
            <StatusCell $ml={7} $w={88}>2089 marks</StatusCell>
            <StatusCell $w={150}>2251 rows by 1 column</StatusCell>
            <StatusCell $w={814}>SUM of MAX(Avg Instructor): 11,056.670</StatusCell>
            <StatusCell $w={127} $line $pad={6} $gap={9}>
              <svg width="11" height="13" fill="#61717f"><circle cx="5.500" cy="3" r="2.900" /><path d="M0 13V9.500q0-2.500 3-2.500h5q3 0 3 2.500V13z" /></svg>
              fadhil suhendi
              <Caret w={8} />
            </StatusCell>
            <StatusCell $w={27} $line /><StatusCell $w={27} $line /><StatusCell $w={47} $line />
            <StatusCell $w={71} $line $pad={8}>
              <svg width="54" height="8" fill="#a9a9a9"><path d="M0 0h1.500v8H0zM6.500 0v8L2 4zM21 0v8l-4.500-4zM33 0v8l4.500-4zM48 0v8l4.500-4zM53 0h1.500v8H53z" /></svg>
            </StatusCell>
            <StatusCell $w={70} $line $pad={8} $gap={10}>
              <svg width="11" height="11" fill="#9f9f9f"><path d="M0 0h3v3H0zM4 0h3v3H4zM8 0h3v3H8zM0 4h3v3H0zM4 4h3v3H4zM8 4h3v3H8zM0 8h3v3H0zM4 8h3v3H4zM8 8h3v3H8z" /></svg>
              <svg width="11" height="11" fill="#9f9f9f"><path d="M0 0h11v6.500H0zM0 8h3v3H0zM4 8h3v3H4zM8 8h3v3H8z" /></svg>
              <svg width="11" height="11" fill="#454545"><path d="M0 0h11v11H0z" /></svg>
            </StatusCell>
          </Status>
        </Window>

        <DockArea>
          <Dock>
            {dockMain.map((d, i) => <DockCell key={i} $run={d.run}>{d.art}</DockCell>)}
            <DockDivider />
            {dockDocs.map((art, i) => <DockCell key={i}>{art}</DockCell>)}
          </Dock>
        </DockArea>
      </Desktop>
    </>
  );
}
